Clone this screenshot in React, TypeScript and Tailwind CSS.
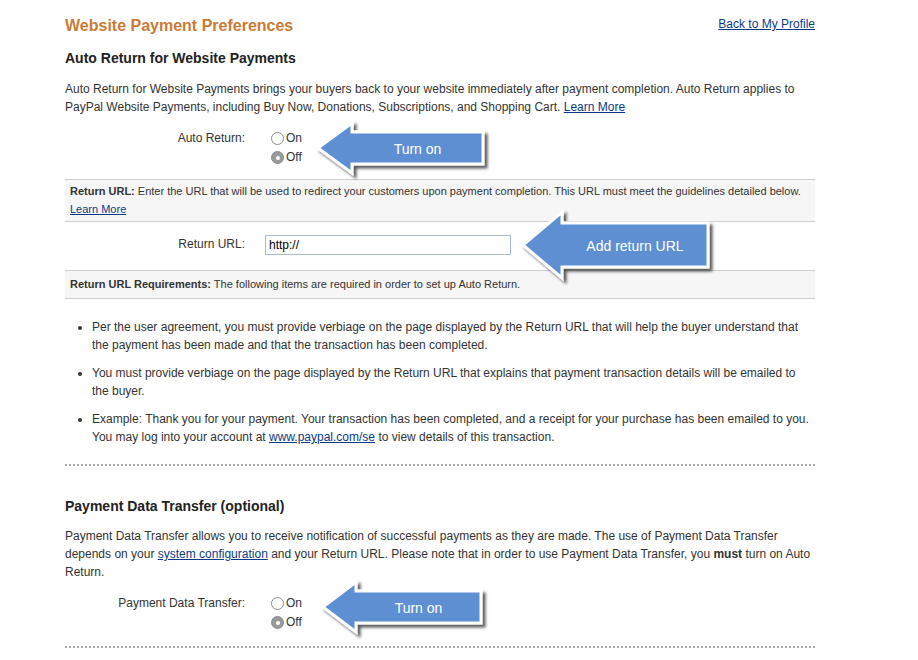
import React from 'react'

const font = "font-['Liberation_Sans',Arial,sans-serif]"

type ArrowProps = {
  tipX: number
  midY: number
  headX: number
  headHalf: number
  bodyHalf: number
  right: number
  label: string
}

// callout arrow drawn over the form, pointing left
const Arrow = ({ tipX, midY, headX, headHalf, bodyHalf, right, label }: ArrowProps) => {
  const pad = 8
  const w = right - tipX + pad * 2
  const h = headHalf * 2 + pad * 2
  const x0 = pad
  const cy = headHalf + pad
  const hx = headX - tipX + pad
  const rx = right - tipX + pad
  const pts = [
    [x0, cy],
    [hx, cy - headHalf],
    [hx, cy - bodyHalf],
    [rx, cy - bodyHalf],
    [rx, cy + bodyHalf],
    [hx, cy + bodyHalf],
    [hx, cy + headHalf],
  ]
    .map((p) => p.join(','))
    .join(' ')
  const id = `sh-${tipX}-${midY}`
  return (
    <svg
      className="absolute pointer-events-none"
      style={{ left: tipX - pad, top: midY - headHalf - pad }}
      width={w}
      height={h}
    >
      <defs>
        <filter id={id} x="-10%" y="-20%" width="130%" height="150%">
          <feDropShadow dx="3" dy="3" stdDeviation="1.4" floodColor="#000" floodOpacity="0.65" />
        </filter>
      </defs>
      <polygon points={pts} fill="#5f8fd3" stroke="#fff" strokeWidth="3" strokeLinejoin="miter" filter={`url(#${id})`} />
      <text
        x={(hx + rx) / 2}
        y={cy + 6}
        textAnchor="middle"
        fill="#fff"
        fontSize="14"
        fontFamily="'Liberation Sans', Arial, sans-serif"
      >
        {label}
      </text>
    </svg>
  )
}

const Radio = ({ checked }: { checked?: boolean }) =>
  checked ? (
    <span className="w-[13px] h-[13px] rounded-full bg-[#9a9a9a] border border-[#8a8a8a] flex items-center justify-center">
      <span className="w-[4px] h-[4px] rounded-full bg-white" />
    </span>
  ) : (
    <span className="w-[13px] h-[13px] rounded-full bg-white border border-[#8c8c8c]" />
  )

const RadioRow = ({ label }: { label: string }) => (
  <div className="flex text-[12px] leading-[19px] text-[#333]">
    <div className="w-[180px] text-right">{label}</div>
    <div className="ml-[26px] flex flex-col">
      <div className="flex items-center gap-[2px]">
        <Radio />
        On
      </div>
      <div className="flex items-center gap-[2px]">
        <Radio checked />
        Off
      </div>
    </div>
  </div>
)

const A = ({ children }: { children: React.ReactNode }) => (
  <a href="#" className="text-[#0b3a87] underline">
    {children}
  </a>
)

export default function App() {
  return (
    <div className={`relative w-[918px] h-[660px] overflow-hidden bg-white text-[#333] ${font}`}>
      <div className="ml-[65px] w-[750px] pt-[16px]">
        <div className="flex justify-between items-start">
          <h1 className="text-[16px] leading-[20px] font-bold text-[#cb7a34]">Website Payment Preferences</h1>
          <a href="#" className="text-[12px] leading-[16px] text-[#0b3a87] underline">
            Back to My Profile
          </a>
        </div>

        <h2 className="mt-[13px] text-[14px] leading-[18px] font-bold text-[#222]">Auto Return for Website Payments</h2>
        <p className="mt-[13px] text-[12px] leading-[18px] whitespace-nowrap">
          Auto Return for Website Payments brings your buyers back to your website immediately after payment completion. Auto Return applies to
          <br />
          PayPal Website Payments, including Buy Now, Donations, Subscriptions, and Shopping Cart. <A>Learn More</A>
        </p>

        <div className="mt-[13px]">
          <RadioRow label="Auto Return:" />
        </div>

        <div className="mt-[12px] bg-[#f6f6f6] border-y border-[#cfcfcf] px-[5px] pt-[2px] pb-[3px] text-[11px] leading-[18px]">
          <b>Return URL:</b> Enter the URL that will be used to redirect your customers upon payment completion. This URL must meet the guidelines detailed below.
          <br />
          <A>Learn More</A>
        </div>

        <div className="h-[48px] flex items-center text-[12px]">
          <div className="w-[180px] text-right -mt-[5px]">Return URL:</div>
          <div className="ml-[20px] w-[246px] h-[20px] border border-[#a9bbd3] bg-white flex items-center px-[3px] text-[12px] text-black -mt-[2px]">
            http://
          </div>
        </div>

        <div className="bg-[#f6f6f6] border-y border-[#cfcfcf] px-[5px] pt-[4px] pb-[5px] text-[11px] leading-[18px]">
          <b>Return URL Requirements:</b> The following items are required in order to set up Auto Return.
        </div>

        <ul className="mt-[19px] list-disc pl-[27px] text-[12px] leading-[18px] flex flex-col gap-[10px] whitespace-nowrap">
          <li>
            Per the user agreement, you must provide verbiage on the page displayed by the Return URL that will help the buyer understand that
            <br />
            the payment has been made and that the transaction has been completed.
          </li>
          <li>
            You must provide verbiage on the page displayed by the Return URL that explains that payment transaction details will be emailed to
            <br />
            the buyer.
          </li>
          <li>
            Example: Thank you for your payment. Your transaction has been completed, and a receipt for your purchase has been emailed to you.
            <br />
            You may log into your account at <A>www.paypal.com/se</A> to view details of this transaction.
          </li>
        </ul>

        <div className="mt-[18px] border-t-2 border-dotted border-[#a8a8a8]" />

        <h2 className="mt-[31px] text-[14px] leading-[18px] font-bold text-[#222]">Payment Data Transfer (optional)</h2>
        <p className="mt-[12px] text-[12px] leading-[18px] whitespace-nowrap">
          Payment Data Transfer allows you to receive notification of successful payments as they are made. The use of Payment Data Transfer
          <br />
          depends on your <A>system configuration</A> and your Return URL. Please note that in order to use Payment Data Transfer, you <b>must</b> turn on Auto
          <br />
          Return.
        </p>

        <div className="mt-[13px]">
          <RadioRow label="Payment Data Transfer:" />
        </div>

        <div className="mt-[14px] border-t-2 border-dotted border-[#a8a8a8]" />
      </div>

      <Arrow tipX={318} midY={148} headX={352} headHalf={25} bodyHalf={16} right={483} label="Turn on" />
      <Arrow tipX={523} midY={245} headX={562} headHalf={33} bodyHalf={22} right={708} label="Add return URL" />
      <Arrow tipX={323} midY={607} headX={356} headHalf={25} bodyHalf={16} right={481} label="Turn on" />
    </div>
  )
}
